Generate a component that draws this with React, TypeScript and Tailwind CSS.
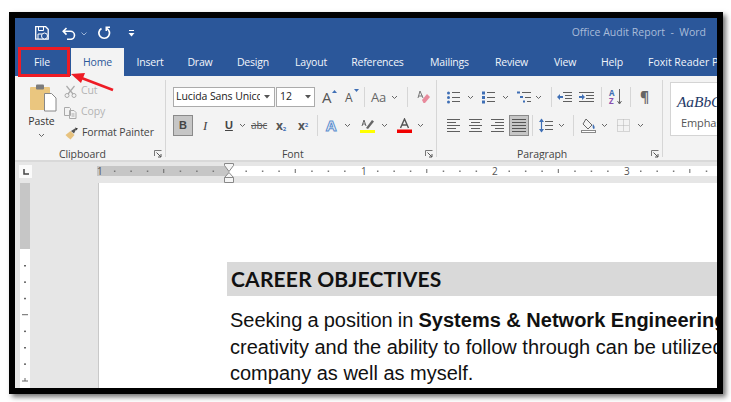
import React from "react";

const C = "#5f5f5f";
const B = "#3f6fb5";

function Chev({ className = "" }: { className?: string }) {
  return (
    <svg width="7" height="5" viewBox="0 0 7 5" className={"shrink-0 " + className}>
      <path d="M1 1l2.500 2.500L6 1" fill="none" stroke="#666" strokeWidth="1" />
    </svg>
  );
}
function Sep({ className = "" }: { className?: string }) {
  return <div className={"w-px self-stretch bg-[#d6d6d6] shrink-0 " + className} />;
}
function Launcher({ className = "" }: { className?: string }) {
  return (
    <svg width="8" height="8" viewBox="0 0 8 8" className={"shrink-0 " + className}>
      <path d="M.5 6V.5H7.500" fill="none" stroke="#777" />
      <path d="M2.500 2.500L7 7M7 4v3H4" fill="none" stroke="#555" />
    </svg>
  );
}
function I({ w, h, className = "", children }: { w: number; h: number; className?: string; children: React.ReactNode }) {
  return (
    <svg width={w} height={h} viewBox={`0 0 ${w} ${h}`} className={"shrink-0 " + className}>
      {children}
    </svg>
  );
}
function Lines({ xs, ys, x2 }: { xs: number; ys: number[]; x2: number }) {
  return <path d={ys.map((y) => `M${xs} ${y}H${x2}`).join("")} stroke={C} fill="none" />;
}
function Align({ kind }: { kind: "l" | "c" | "r" }) {
  const rows = [13, 9, 13, 9, 13];
  const d = rows
    .map((w, i) => {
      const x = kind === "l" ? 0 : kind === "r" ? 13 - w : (13 - w) / 2;
      return `M${x} ${i * 3 + 0.5}h${w}`;
    })
    .join("");
  return (
    <I w={13} h={13}>
      <path d={d} stroke={C} fill="none" />
    </I>
  );
}

function HRuler() {
  const ticks: React.ReactNode[] = [];
  for (let i = -8; i < 32; i++) {
    const x = 132 + i * 16.44;
    if (i % 8 === 0) continue;
    if (x < 2 || x > 620) continue;
    if (i % 4 === 0) ticks.push(<rect key={i} x={x} y={3} width={1} height={4} fill="#666" />);
    else ticks.push(<rect key={i} x={x} y={4.5} width={1.5} height={1.5} fill="#777" />);
  }
  const nums: [number, string][] = [
    [0, "1"],
    [264, "1"],
    [395, "2"],
    [527, "3"],
  ];
  return (
    <svg width="620" height="10" viewBox="0 0 620 10" className="block">
      <rect width="132" height="10" fill="#c6c6c6" />
      <rect x="132" width="488" height="10" fill="#fff" />
      {ticks}
      {nums.map(([x, t], i) => (
        <text key={i} x={x} y={9} fontSize="10" fill="#555" fontFamily="Open Sans, sans-serif" textAnchor="start">
          {t}
        </text>
      ))}
    </svg>
  );
}

function VRuler() {
  const t: React.ReactNode[] = [];
  for (let i = 1; i < 8; i++) {
    const y = 82 + (i - 1) * 16.4;
    if (i === 4) t.push(<rect key={i} x={2} y={y} width={6} height={1} fill="#666" />);
    else t.push(<rect key={i} x={4} y={y} width={2} height={1.5} fill="#666" />);
  }
  return (
    <svg width="10" height="205" viewBox="0 0 10 205" className="block">
      <rect width="10" height="66" fill="#c6c6c6" />
      <rect y="66" width="10" height="139" fill="#fff" />
      {t}
      <path d="M2 198h6M5 195v3" stroke="#666" fill="none" />
    </svg>
  );
}

const tabs: [string, string][] = [
  ["Insert", "w-[52px]"],
  ["Draw", "w-[48px]"],
  ["Design", "w-[58px]"],
  ["Layout", "w-[58px]"],
  ["References", "w-[75px]"],
  ["Mailings", "w-[69px]"],
  ["Review", "w-[55px]"],
  ["View", "w-[52px]"],
  ["Help", "w-[42px]"],
];

export default function App() {
  return (
    <div className="w-[731px] h-[402px] bg-white pt-[12px] pl-[9px] overflow-hidden font-['Open_Sans',sans-serif]">
      <div className="relative w-[714px] h-[382px] border-x-[6px] border-y-[6px] border-black shadow-[3px_3px_5px_rgba(0,0,0,0.55)] flex flex-col overflow-hidden bg-white">
        {/* title bar */}
        <div className="h-[30px] shrink-0 bg-[#2b579a] flex items-center pl-[20px] text-white">
          <I w={14} h={14}>
            <path d="M.7.7h10l2.500 2.500v10H.700z" fill="none" stroke="#fff" strokeWidth="1.300" />
            <path d="M3.500 1v3.500h5V1" fill="none" stroke="#fff" />
            <circle cx="9.500" cy="10" r="3" fill="#2b579a" stroke="#fff" />
            <path d="M3 13V8h4" fill="none" stroke="#fff" />
          </I>
          <I w={14} h={13} className="ml-[13px]">
            <path d="M4.500 1L1.200 4.300l3.300 3.300M1.500 4.300h7a4 4 0 0 1 0 8H5" fill="none" stroke="#fff" strokeWidth="1.600" />
          </I>
          <svg width="6" height="4" viewBox="0 0 6 4" className="ml-[5px] mt-[1px] shrink-0">
            <path d="M.5.500L3 3 5.500.500" fill="none" stroke="#9db4d6" />
          </svg>
          <I w={13} h={14} className="ml-[11px]">
            <path d="M8.500 2.200a5.300 5.300 0 1 1-5 .2" fill="none" stroke="#fff" strokeWidth="1.700" />
            <path d="M7.500.5h4.500v1.500h-3v3H7.500z" fill="#fff" />
          </I>
          <svg width="7" height="7" viewBox="0 0 7 7" className="ml-[17px] shrink-0">
            <path d="M1 .5h5" stroke="#fff" fill="none" />
            <path d="M.5 3h6L3.500 6.500z" fill="#fff" />
          </svg>
          <div className="ml-auto mr-[11px] text-[10.500px] text-[#a9bcd9] whitespace-pre">Office Audit Report  -  Word</div>
        </div>
        {/* tabs */}
        <div className="h-[28px] shrink-0 bg-[#2b579a] flex items-stretch text-[10.500px] tracking-[-0.2px] text-[#f2f5fa] whitespace-nowrap overflow-hidden">
          <div className="w-[54px] mr-[2px] pt-[1px] shrink-0 flex items-center justify-center">File</div>
          <div className="w-[53px] pt-[1px] shrink-0 flex items-center justify-center bg-[#f3f3f3] text-[#2b579a]">Home</div>
          {tabs.map(([t, w]) => (
            <div key={t} className={w + " pt-[1px] flex items-center justify-center shrink-0"}>
              {t}
            </div>
          ))}
          <div className="pl-[15px] pt-[1px] shrink-0 flex items-center tracking-normal">Foxit Reader PDF</div>
        </div>
        {/* ribbon */}
        <div className="h-[84px] shrink-0 bg-[#f3f3f3] flex pt-[4px] pb-[3px] text-[10.500px] tracking-[-0.1px] text-[#444]">
          {/* clipboard */}
          <div className="w-[151px] shrink-0 border-r border-[#d6d6d6] flex flex-col">
            <div className="flex h-[65px]">
              <div className="ml-[11px] w-[31px] flex flex-col items-center">
                <I w={27} h={28} className="mt-[4px] ml-[4px]">
                  <rect x="0" y="3" width="20" height="23" rx="1" fill="#eac67f" />
                  <rect x="6" y="0.500" width="8" height="5" rx="1" fill="#7b7b7b" />
                  <path d="M14.500 9.500h7l4.500 4.500v13h-11.500z" fill="#fff" stroke="#888" />
                </I>
                <div className="mt-[2px] leading-[14px] text-[#333]">Paste</div>
                <Chev className="mt-[5px]" />
              </div>
              <div className="ml-[7px] flex flex-col">
                <div className="flex items-center h-[14px] mt-[4px] text-[#b3b3b3]">
                  <I w={13} h={13}>
                    <path d="M2.500 1l6.500 8M10.500 1L4 9" stroke="#aaa" fill="none" strokeWidth="1.200" />
                    <circle cx="3" cy="10.500" r="2" fill="none" stroke="#aaa" />
                    <circle cx="10" cy="10.500" r="2" fill="none" stroke="#aaa" />
                  </I>
                  <span className="ml-[4px]">Cut</span>
                </div>
                <div className="flex items-center h-[14px] mt-[7px] text-[#b3b3b3]">
                  <I w={13} h={13}>
                    <path d="M.5 1.500h5l1 1v7h-6zM5.500 4.500h4.500l2 2v6h-6.500z" fill="#f3f3f3" stroke="#aaa" />
                    <path d="M7.500 8h3M7.500 10h3" stroke="#aaa" />
                  </I>
                  <span className="ml-[4px]">Copy</span>
                </div>
                <div className="flex items-center h-[14px] mt-[7px] ml-[1px] text-[#444]">
                  <I w={14} h={13}>
                    <path d="M.5 8l5-4 4 4-4 4.500C4 11 2 10 .5 8z" fill="#e7c27e" />
                    <path d="M6 4l4-2.500 1 1-2 4z" fill="#555" />
                    <path d="M10 .500l3 1-2 2z" fill="#333" />
                  </I>
                  <span className="ml-[3px]">Format Painter</span>
                </div>
              </div>
            </div>
            <div className="mt-auto mb-[-3px] h-[12px] flex items-center leading-[12px]">
              <span className="ml-[44px] text-[#444]">Clipboard</span>
              <Launcher className="ml-auto mr-[3px]" />
            </div>
          </div>

          {/* font */}
          <div className="w-[271px] shrink-0 border-r border-[#d6d6d6] flex flex-col">
            <div className="flex items-center h-[20px] mt-[7px] pl-[7px]">
              <div className="w-[102px] h-[20px] border border-[#ababab] bg-white flex items-center pl-[2px] overflow-hidden text-[10.500px] text-[#222] whitespace-nowrap">
                <span className="w-[84px] overflow-hidden">Lucida Sans Unicode</span>
                <svg width="6" height="4" viewBox="0 0 6 4" className="ml-[4px] shrink-0"><path d="M0 0h6L3 3.500z" fill="#555" /></svg>
              </div>
              <div className="ml-[1px] w-[39px] h-[20px] border border-[#ababab] bg-white flex items-center pl-[3px] text-[10.500px] text-[#222]">
                12
                <svg width="6" height="4" viewBox="0 0 6 4" className="ml-auto mr-[3px] shrink-0"><path d="M0 0h6L3 3.500z" fill="#555" /></svg>
              </div>
              <div className="ml-[7px] w-[15px] text-[15px] leading-[15px] text-[#555] relative shrink-0">
                A
                <svg width="5" height="3" viewBox="0 0 5 3" className="absolute right-0 top-0"><path d="M0 3h5L2.500 0z" fill={B} /></svg>
              </div>
              <div className="ml-[8px] w-[14px] text-[12px] leading-[14px] pt-[2px] text-[#555] relative shrink-0">
                A
                <svg width="5" height="3" viewBox="0 0 5 3" className="absolute right-0 top-0"><path d="M0 0h5L2.500 3z" fill={B} /></svg>
              </div>
              <Sep className="ml-[5px]" />
              <span className="ml-[6px] text-[13px] leading-[14px] text-[#666] w-[16px] shrink-0">Aa</span>
              <Chev className="ml-[4px]" />
              <Sep className="ml-[9px]" />
              <I w={15} h={14} className="ml-[7px]">
                <path d="M3 8L5 1l3 7M3.500 6h4" stroke="#777" fill="none" />
                <path d="M7 10l5-6 3 3-5 6H8.500z" fill="#e88a9c" />
              </I>
            </div>
            <div className="flex items-center h-[21px] mt-[8px] pl-[7px]">
              <div className="w-[20px] h-[21px] bg-[#c6c6c6] border border-[#8a8a8a] flex items-center justify-center font-bold font-['Liberation_Sans',sans-serif] text-[#444] text-[11px]">B</div>
              <span className="ml-[10px] w-[10px] italic font-['Liberation_Serif',serif] text-[13px] text-[#444] shrink-0">I</span>
              <span className="ml-[12px] w-[9px] underline font-bold font-['Liberation_Sans',sans-serif] text-[11px] text-[#444] shrink-0">U</span>
              <Chev className="ml-[5px]" />
              <span className="ml-[5px] w-[16px] line-through text-[10px] text-[#555] shrink-0">abc</span>
              <span className="ml-[9px] w-[13px] font-bold text-[12px] leading-[14px] text-[#555] shrink-0">x<sub className="text-[6px] text-[#3f6fb5] font-bold">2</sub></span>
              <span className="ml-[9px] w-[13px] font-bold text-[12px] leading-[14px] text-[#555] shrink-0">x<sup className="text-[6px] text-[#3f6fb5] font-bold">2</sup></span>
              <Sep className="ml-[6px]" />
              <span className="ml-[8px] w-[13px] font-bold text-[15px] leading-[15px] text-[#f3f3f3] shrink-0 [-webkit-text-stroke:1px_#5b8fd0]">A</span>
              <Chev className="ml-[5px]" />
              <I w={15} h={15} className="ml-[9px]">
                <path d="M2 8l2-6 2 6M3 6h2" stroke="#666" fill="none" />
                <path d="M6 10l6-8 2 1.500-6 7.500z" fill="#666" />
                <rect y="12" width="15" height="3" fill="#ffff00" />
              </I>
              <Chev className="ml-[6px]" />
              <I w={15} h={15} className="ml-[9px]">
                <path d="M3.500 10L7.500 1l4 9M5 7h5" stroke="#555" strokeWidth="1.400" fill="none" />
                <rect y="11.500" width="15" height="3.500" fill="#f00000" />
              </I>
              <Chev className="ml-[5px]" />
            </div>
            <div className="mt-auto mb-[-3px] h-[12px] flex items-center leading-[12px]">
              <span className="ml-[116px]">Font</span>
              <Launcher className="ml-auto mr-[3px]" />
            </div>
          </div>

          {/* paragraph */}
          <div className="w-[226px] shrink-0 border-r border-[#d6d6d6] flex flex-col">
            <div className="flex items-center h-[20px] mt-[7px] pl-[10px]">
              <I w={13} h={13}>
                <circle cx="1.500" cy="2" r="1.500" fill={B} /><circle cx="1.500" cy="6.500" r="1.500" fill={B} /><circle cx="1.500" cy="11" r="1.500" fill={B} />
                <Lines xs={5} ys={[1.5, 6.5, 10.5]} x2={13} />
              </I>
              <Chev className="ml-[7px]" />
              <I w={13} h={13} className="ml-[8px]">
                <rect x="0" y="0.500" width="3" height="3" fill={B} /><rect x="0" y="5" width="3" height="3" fill={B} /><rect x="0" y="9.500" width="3" height="3" fill={B} />
                <Lines xs={5} ys={[1.5, 6.5, 10.5]} x2={13} />
              </I>
              <Chev className="ml-[7px]" />
              <I w={14} h={13} className="ml-[8px]">
                <rect x="0" y="0.500" width="3" height="2" fill={B} /><rect x="3" y="5" width="3" height="2" fill={B} /><rect x="6" y="9.500" width="2" height="2" fill={B} />
                <path d="M5 1.500h9M8 6.500h6M10 10.500h4" stroke={C} fill="none" />
              </I>
              <Chev className="ml-[4px]" />
              <Sep className="ml-[9px]" />
              <I w={15} h={12} className="ml-[5px]">
                <path d="M6 1.500h9M8 4.500h7M8 7.500h7M6 10.500h9" stroke={C} fill="none" />
                <path d="M0 6l3-3v2h3v2H3v2z" fill={B} />
              </I>
              <I w={15} h={12} className="ml-[7px]">
                <path d="M0 1.500h15M7 4.500h8M7 7.500h8M0 10.500h15" stroke={C} fill="none" />
                <path d="M6 6L3 3v2H0v2h3v2z" fill={B} />
              </I>
              <Sep className="ml-[7px]" />
              <div className="ml-[7px] w-[13px] h-[16px] relative shrink-0 font-bold text-[8px] leading-[8px] tracking-normal">
                <span className="block text-[#3f6fb5]">A</span>
                <span className="block text-[#8a4fb0]">Z</span>
                <svg width="5" height="16" viewBox="0 0 5 16" className="absolute right-0 top-0"><path d="M2.500 0v15M.5 12l2 3 2-3" stroke="#666" fill="none" /></svg>
              </div>
              <Sep className="ml-[8px]" />
              <span className="ml-[9px] text-[14px] leading-[16px] font-bold text-[#666] shrink-0">¶</span>
            </div>
            <div className="flex items-center h-[21px] mt-[8px] pl-[10px]">
              <Align kind="l" />
              <div className="ml-[9px]"><Align kind="c" /></div>
              <div className="ml-[9px]"><Align kind="r" /></div>
              <div className="ml-[5px] w-[20px] h-[21px] bg-[#c6c6c6] border border-[#8a8a8a] flex items-center justify-center shrink-0">
                <I w={14} h={13}>
                  <path d="M0 .5h14M0 3.500h14M0 6.500h14M0 9.500h14M0 12.500h14" stroke="#555" fill="none" />
                </I>
              </div>
              <Sep className="ml-[3px]" />
              <I w={14} h={15} className="ml-[6px]">
                <path d="M2.500 1v13" stroke={B} strokeWidth="1.200" />
                <path d="M0 4l2.500-3.500L5 4zM0 11l2.500 3.500L5 11z" fill={B} />
                <path d="M6 3.500h8M6 7.500h8M6 11.500h8" stroke={C} fill="none" />
              </I>
              <Chev className="ml-[5px]" />
              <Sep className="ml-[8px]" />
              <I w={16} h={15} className="ml-[7px]">
                <path d="M5 1l6 6-4 4-5-5z" fill="#f3f3f3" stroke="#666" />
                <path d="M12 6c2 2.500 2 4 1 5-1 0-2-2-1-5z" fill={B} />
                <rect x="0.500" y="12.500" width="14" height="2" fill="#fff" stroke="#888" />
              </I>
              <Chev className="ml-[4px]" />
              <I w={13} h={13} className="ml-[9px]">
                <path d="M.5.5h12v12H.500zM6.500.500v12M.5 6.500h12" fill="none" stroke="#b5b5b5" strokeDasharray="1 1" />
              </I>
              <Chev className="ml-[7px]" />
            </div>
            <div className="mt-auto mb-[-3px] h-[12px] flex items-center leading-[12px]">
              <span className="ml-[80px]">Paragraph</span>
              <Launcher className="ml-auto mr-[3px]" />
            </div>
          </div>

          {/* styles */}
          <div className="flex-1 min-w-0 pl-[7px] pt-[2px] overflow-hidden">
            <div className="w-[60px] h-[54px] bg-white border border-[#d4d4d4] overflow-hidden whitespace-nowrap">
              <div className="mt-[9px] ml-[6px] font-['Liberation_Serif',serif] italic text-[15.500px] leading-[20px] text-[#1f3a68]">AaBbCcDd</div>
              <div className="mt-[4px] ml-[10px] text-[11px] leading-[14px] text-[#555]">Emphasis</div>
            </div>
          </div>
        </div>
        {/* ruler row */}
        <div className="h-[23px] shrink-0 bg-[#e6e6e6] border-t-2 border-[#d9d9d9] flex relative">
          <div className="mt-[3px] ml-[4px] w-[13px] h-[13px] bg-[#fafafa] flex items-center justify-center shrink-0">
            <svg width="6" height="6" viewBox="0 0 6 6"><path d="M1 0v5h5" stroke="#444" strokeWidth="1.500" fill="none" /></svg>
          </div>
          <div className="ml-[65px] mt-[4px]">
            <HRuler />
          </div>
          <svg width="10" height="20" viewBox="0 0 10 20" className="absolute left-[209px] top-[1px]">
            <path d="M.5.5h9v2L5 8.500.5 2.500zM5 9.500l4.500 5v5h-9v-5z" fill="#f5f5f5" stroke="#888" />
            <path d="M.5 14.500h9" stroke="#888" />
          </svg>
        </div>
        {/* document */}
        <div className="flex-1 min-h-0 flex bg-[#e6e6e6]">
          <div className="ml-[5px] w-[10px] shrink-0">
            <VRuler />
          </div>
          <div className="ml-[68px] w-[1px] bg-[#c9c9c9] shrink-0" />
          <div className="flex-1 min-w-0 bg-white overflow-hidden pt-[79px] pl-[128px] whitespace-nowrap">
            <div className="h-[34px] bg-[#d9d9d9] flex items-center pl-[4px] font-['Lato',sans-serif] font-bold text-[21px] tracking-[0.2px] text-[#111]">CAREER OBJECTIVES</div>
            <div className="mt-[11px] pl-[3px] font-['Liberation_Sans',sans-serif] text-[20px] leading-[26.500px] text-[#111]">
              <div><span className="[word-spacing:-0.4px]">Seeking a position in </span><b>Systems &amp; Network Engineering</b> where my</div>
              <div>creativity and the ability to follow through can be utilized to benefit the</div>
              <div>company as well as myself.</div>
            </div>
          </div>
        </div>
        {/* annotation */}
        <div className="absolute left-[3px] top-[29px] w-[52px] h-[30px] border-[3px] border-[#ee1c25]" />
        <svg width="60" height="30" viewBox="0 0 60 30" className="absolute left-[50px] top-[50px]">
          <path d="M48 22L14 9" stroke="#ee1c25" strokeWidth="2.500" fill="none" />
          <path d="M6 6l14-1-4 10z" fill="#ee1c25" />
        </svg>
      </div>
    </div>
  );
}
